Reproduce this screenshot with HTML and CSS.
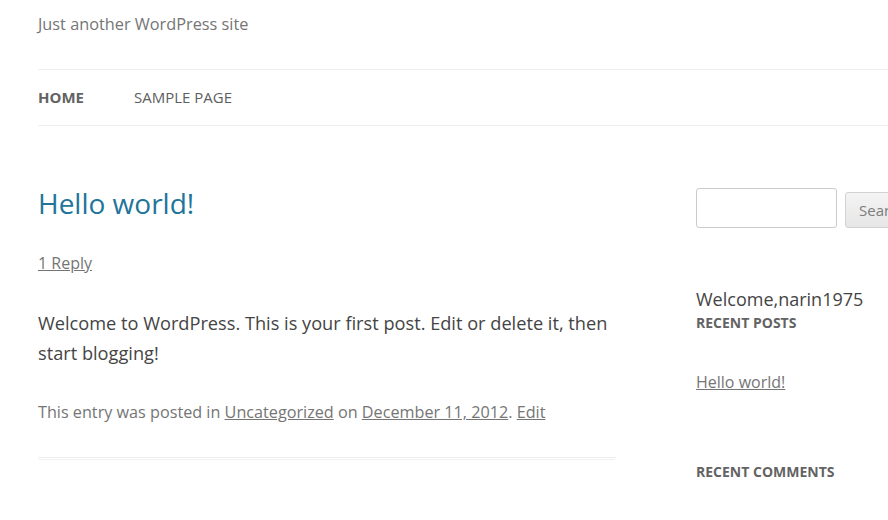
FILE: index.html
```html
<!DOCTYPE html>
<html>
<head>
<meta charset="utf-8">
<link rel="stylesheet" href="styles.css">
</head>
<body>
<div class="page">
  <header class="site-header">
    <p class="site-description">Just another WordPress site</p>
    <nav class="main-nav">
      <a class="nav-item current" href="#">Home</a>
      <a class="nav-item" href="#">Sample Page</a>
    </nav>
  </header>
  <div class="layout">
    <main class="content">
      <article class="post">
        <h1 class="entry-title">Hello world!</h1>
        <div class="comments-link"><a href="#">1 Reply</a></div>
        <p class="entry-content">Welcome to WordPress. This is your first post. Edit or delete it, then start blogging!</p>
        <footer class="entry-meta">This entry was posted in <a href="#">Uncategorized</a> on <a href="#">December 11, 2012</a>. <a href="#">Edit</a></footer>
      </article>
    </main>
    <aside class="sidebar">
      <form class="search-form">
        <input class="search-input" type="text">
        <button class="search-button" type="button">Search</button>
      </form>
      <div class="welcome">Welcome,narin1975</div>
      <h3 class="widget-title">Recent Posts</h3>
      <a class="widget-link" href="#">Hello world!</a>
      <h3 class="widget-title comments-title">Recent Comments</h3>
    </aside>
  </div>
</div>
</body>
</html>
```
FILE: styles.css
```css
html, body {
  margin: 0;
  padding: 0;
  background: #fff;
  overflow: hidden;
}
body {
  font-family: "Open Sans", "Liberation Sans", sans-serif;
  color: #444;
  width: 888px;
  height: 520px;
}
.page {
  padding-left: 38px;
  width: 1100px;
}
.site-description {
  margin: 12px 0 0;
  font-size: 16.3px;
  line-height: 24px;
  color: #757575;
}
.main-nav {
  margin-top: 33px;
  width: 850px;
  border-top: 1px solid #ededed;
  border-bottom: 1px solid #ededed;
  padding: 15px 0 16px;
  display: flex;
  gap: 50px;
}
.nav-item {
  font-size: 15px;
  line-height: 24px;
  text-transform: uppercase;
  color: #5e5e5e;
  text-decoration: none;
}
.nav-item.current {
  font-weight: bold;
  color: #636363;
}
.layout {
  display: flex;
  gap: 80px;
}
.content {
  width: 578px;
  flex: none;
}
.entry-title {
  margin: 60px 0 0;
  font-size: 28px;
  line-height: 34px;
  font-weight: normal;
  color: #21759b;
}
.comments-link {
  margin-top: 31px;
  font-size: 16px;
  line-height: 24px;
}
.comments-link a,
.entry-meta a,
.widget-link {
  color: #757575;
  text-decoration: underline;
}
.entry-content {
  margin: 33px 0 0;
  font-size: 18.2px;
  line-height: 30px;
  color: #444;
}
.entry-meta {
  margin-top: 32px;
  font-size: 16.2px;
  line-height: 24px;
  color: #757575;
  padding-bottom: 33px;
  border-bottom: 1px solid #ededed;
  box-shadow: 0 2px 0 -1px #fff, 0 3px 0 -1px #f0f0f0;
}
.sidebar {
  width: 300px;
  flex: none;
}
.search-form {
  margin-top: 62px;
  display: flex;
  align-items: flex-end;
  gap: 8px;
}
.search-input {
  width: 141px;
  height: 40px;
  box-sizing: border-box;
  border: 1px solid #ccc;
  border-radius: 3px;
  margin: 0;
  padding: 0;
}
.search-button {
  height: 36px;
  box-sizing: border-box;
  padding: 0 13px;
  border: 1px solid #d2d2d2;
  border-radius: 3px;
  background: linear-gradient(#f4f4f4, #e6e6e6);
  color: #7c7c7c;
  font-family: "Open Sans", "Liberation Sans", sans-serif;
  font-size: 15px;
  margin: 0;
}
.welcome {
  margin-top: 59px;
  font-size: 18px;
  line-height: 24px;
  color: #444;
}
.widget-title {
  margin: 0;
  font-size: 14px;
  line-height: 24px;
  font-weight: bold;
  text-transform: uppercase;
  color: #636363;
}
.widget-link {
  display: block;
  margin-top: 35px;
  font-size: 16px;
  line-height: 24px;
}
.comments-title {
  margin-top: 66px;
}
```
